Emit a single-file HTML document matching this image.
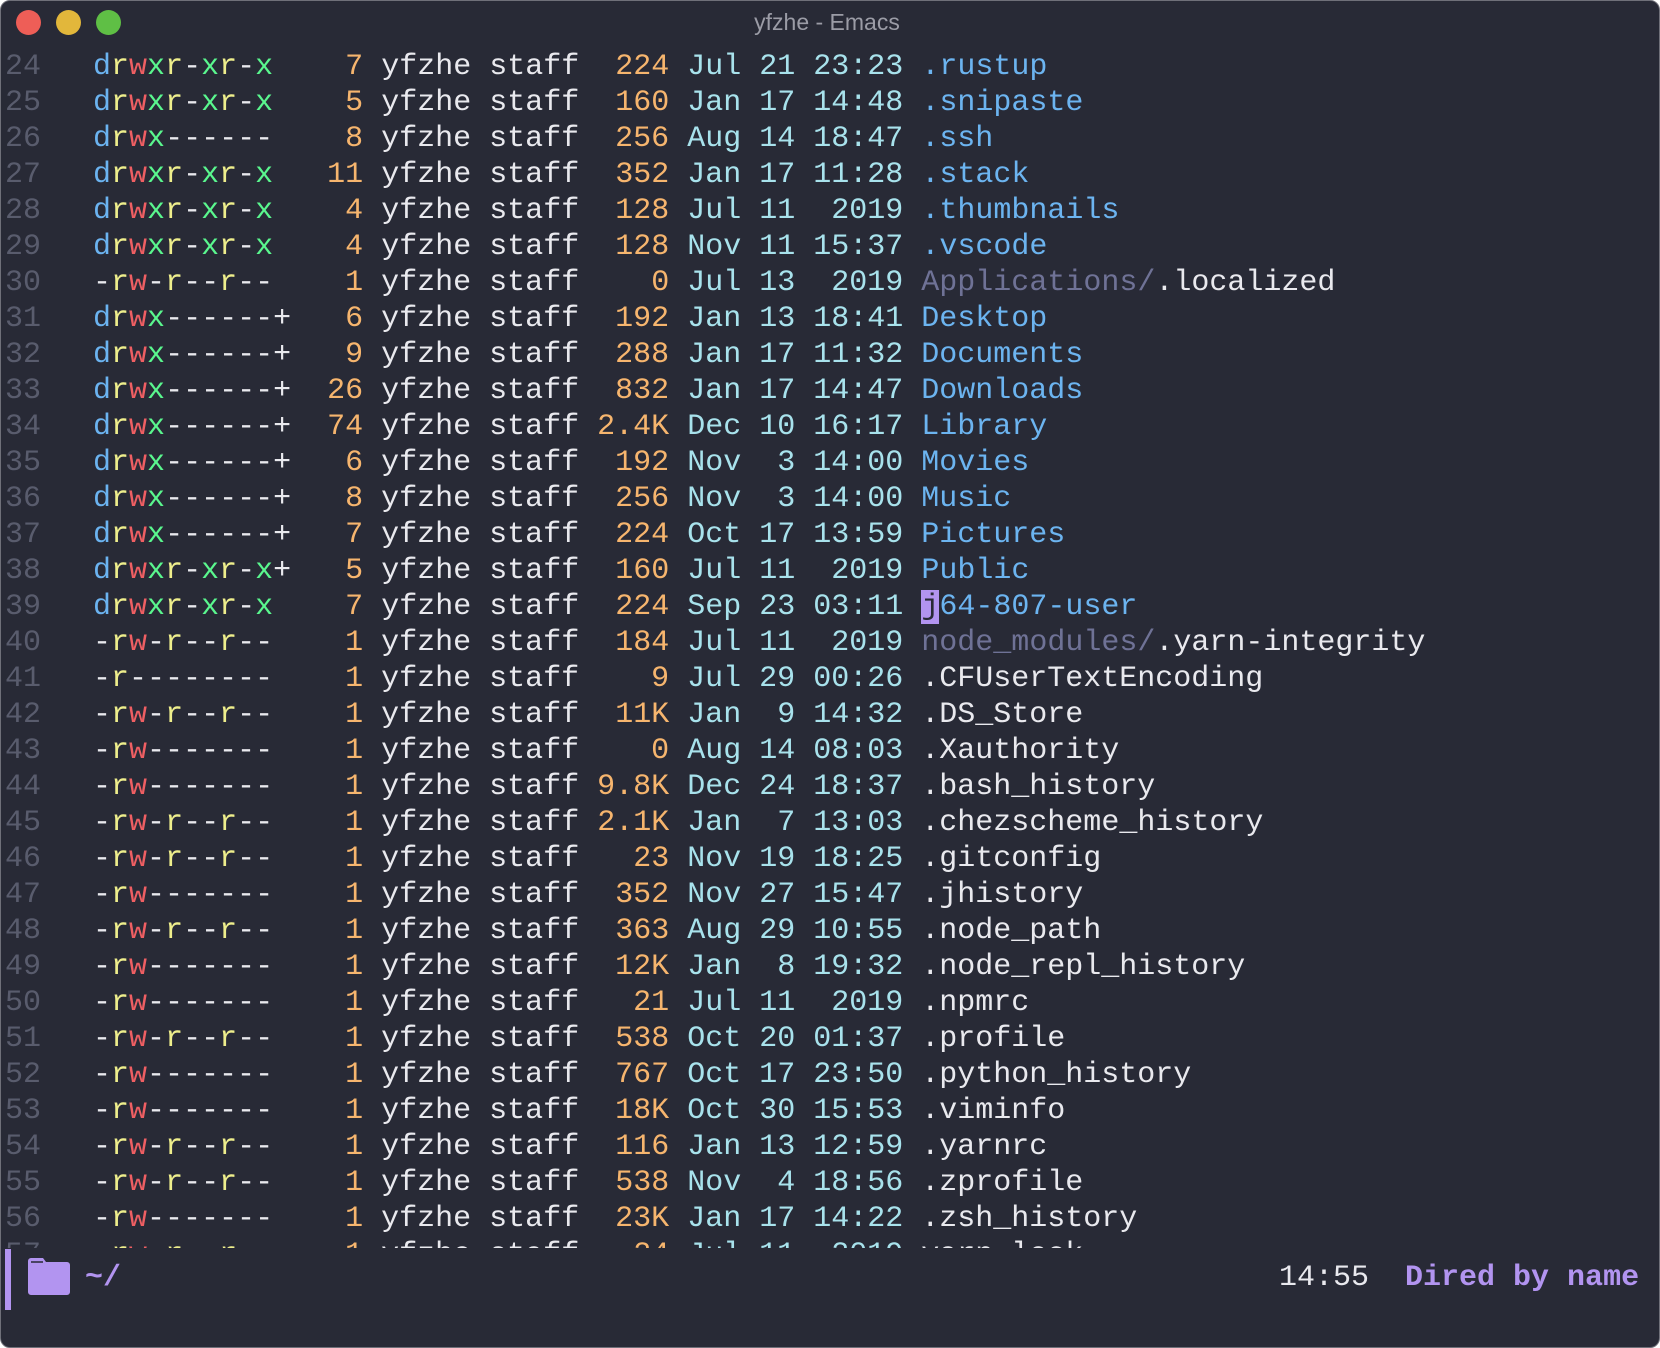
<!DOCTYPE html>
<html><head><meta charset="utf-8"><style>
html,body{margin:0;padding:0;background:#fff;width:1660px;height:1348px;overflow:hidden}
.win{position:absolute;left:0;top:0;width:1658px;height:1346px;background:#282a36;border:1px solid #6f7079;border-radius:10px;overflow:hidden}
.dot{position:absolute;top:9px;width:25px;height:25px;border-radius:50%}
.title{position:absolute;top:8px;left:-4px;width:1660px;text-align:center;font:23px "Liberation Sans",sans-serif;color:#9b9ca6}
.ln{position:absolute;left:4px;top:48px;height:1199px;overflow:hidden;font:30px/36px "Liberation Mono",monospace;color:#595c6d;white-space:pre}
.txt{position:absolute;left:92px;top:48px;height:1199px;overflow:hidden;font:30px/36px "Liberation Mono",monospace;color:#e9e9ee;white-space:pre}
em,i,u,s,b,q,kbd,var{font-style:normal;text-decoration:none;font-weight:normal;font-family:inherit;font-size:inherit}
q{quotes:none}
em{color:#6bb3f0} i{color:#eeee8c} u{color:#ef5f63} s{color:#5af78e}
b{color:#f6b56e} q{color:#a8e2ec} kbd{color:#6cb4f0} var{color:#6f7296}
.cur{background:#b294f0;color:#282a36}
.ml{position:absolute;top:1247px;left:0;width:1660px;height:62px}
</style></head><body><div class="win">
<div class="dot" style="left:15px;background:#ee5e57"></div>
<div class="dot" style="left:55px;background:#e2b73b"></div>
<div class="dot" style="left:95px;background:#5fbf45"></div>
<div class="title">yfzhe - Emacs</div>
<div class="ln">24
25
26
27
28
29
30
31
32
33
34
35
36
37
38
39
40
41
42
43
44
45
46
47
48
49
50
51
52
53
54
55
56
57</div>
<div class="txt"><em>d</em><i>r</i><u>w</u><s>x</s><i>r</i>-<s>x</s><i>r</i>-<s>x</s>    <b>7</b> yfzhe staff  <b>224</b> <q>Jul 21 23:23</q> <kbd>.rustup</kbd>
<em>d</em><i>r</i><u>w</u><s>x</s><i>r</i>-<s>x</s><i>r</i>-<s>x</s>    <b>5</b> yfzhe staff  <b>160</b> <q>Jan 17 14:48</q> <kbd>.snipaste</kbd>
<em>d</em><i>r</i><u>w</u><s>x</s>------    <b>8</b> yfzhe staff  <b>256</b> <q>Aug 14 18:47</q> <kbd>.ssh</kbd>
<em>d</em><i>r</i><u>w</u><s>x</s><i>r</i>-<s>x</s><i>r</i>-<s>x</s>   <b>11</b> yfzhe staff  <b>352</b> <q>Jan 17 11:28</q> <kbd>.stack</kbd>
<em>d</em><i>r</i><u>w</u><s>x</s><i>r</i>-<s>x</s><i>r</i>-<s>x</s>    <b>4</b> yfzhe staff  <b>128</b> <q>Jul 11  2019</q> <kbd>.thumbnails</kbd>
<em>d</em><i>r</i><u>w</u><s>x</s><i>r</i>-<s>x</s><i>r</i>-<s>x</s>    <b>4</b> yfzhe staff  <b>128</b> <q>Nov 11 15:37</q> <kbd>.vscode</kbd>
-<i>r</i><u>w</u>-<i>r</i>--<i>r</i>--    <b>1</b> yfzhe staff    <b>0</b> <q>Jul 13  2019</q> <var>Applications/</var>.localized
<em>d</em><i>r</i><u>w</u><s>x</s>------+   <b>6</b> yfzhe staff  <b>192</b> <q>Jan 13 18:41</q> <kbd>Desktop</kbd>
<em>d</em><i>r</i><u>w</u><s>x</s>------+   <b>9</b> yfzhe staff  <b>288</b> <q>Jan 17 11:32</q> <kbd>Documents</kbd>
<em>d</em><i>r</i><u>w</u><s>x</s>------+  <b>26</b> yfzhe staff  <b>832</b> <q>Jan 17 14:47</q> <kbd>Downloads</kbd>
<em>d</em><i>r</i><u>w</u><s>x</s>------+  <b>74</b> yfzhe staff <b>2.4K</b> <q>Dec 10 16:17</q> <kbd>Library</kbd>
<em>d</em><i>r</i><u>w</u><s>x</s>------+   <b>6</b> yfzhe staff  <b>192</b> <q>Nov  3 14:00</q> <kbd>Movies</kbd>
<em>d</em><i>r</i><u>w</u><s>x</s>------+   <b>8</b> yfzhe staff  <b>256</b> <q>Nov  3 14:00</q> <kbd>Music</kbd>
<em>d</em><i>r</i><u>w</u><s>x</s>------+   <b>7</b> yfzhe staff  <b>224</b> <q>Oct 17 13:59</q> <kbd>Pictures</kbd>
<em>d</em><i>r</i><u>w</u><s>x</s><i>r</i>-<s>x</s><i>r</i>-<s>x</s>+   <b>5</b> yfzhe staff  <b>160</b> <q>Jul 11  2019</q> <kbd>Public</kbd>
<em>d</em><i>r</i><u>w</u><s>x</s><i>r</i>-<s>x</s><i>r</i>-<s>x</s>    <b>7</b> yfzhe staff  <b>224</b> <q>Sep 23 03:11</q> <kbd><span class="cur">j</span>64-807-user</kbd>
-<i>r</i><u>w</u>-<i>r</i>--<i>r</i>--    <b>1</b> yfzhe staff  <b>184</b> <q>Jul 11  2019</q> <var>node_modules/</var>.yarn-integrity
-<i>r</i>--------    <b>1</b> yfzhe staff    <b>9</b> <q>Jul 29 00:26</q> .CFUserTextEncoding
-<i>r</i><u>w</u>-<i>r</i>--<i>r</i>--    <b>1</b> yfzhe staff  <b>11K</b> <q>Jan  9 14:32</q> .DS_Store
-<i>r</i><u>w</u>-------    <b>1</b> yfzhe staff    <b>0</b> <q>Aug 14 08:03</q> .Xauthority
-<i>r</i><u>w</u>-------    <b>1</b> yfzhe staff <b>9.8K</b> <q>Dec 24 18:37</q> .bash_history
-<i>r</i><u>w</u>-<i>r</i>--<i>r</i>--    <b>1</b> yfzhe staff <b>2.1K</b> <q>Jan  7 13:03</q> .chezscheme_history
-<i>r</i><u>w</u>-<i>r</i>--<i>r</i>--    <b>1</b> yfzhe staff   <b>23</b> <q>Nov 19 18:25</q> .gitconfig
-<i>r</i><u>w</u>-------    <b>1</b> yfzhe staff  <b>352</b> <q>Nov 27 15:47</q> .jhistory
-<i>r</i><u>w</u>-<i>r</i>--<i>r</i>--    <b>1</b> yfzhe staff  <b>363</b> <q>Aug 29 10:55</q> .node_path
-<i>r</i><u>w</u>-------    <b>1</b> yfzhe staff  <b>12K</b> <q>Jan  8 19:32</q> .node_repl_history
-<i>r</i><u>w</u>-------    <b>1</b> yfzhe staff   <b>21</b> <q>Jul 11  2019</q> .npmrc
-<i>r</i><u>w</u>-<i>r</i>--<i>r</i>--    <b>1</b> yfzhe staff  <b>538</b> <q>Oct 20 01:37</q> .profile
-<i>r</i><u>w</u>-------    <b>1</b> yfzhe staff  <b>767</b> <q>Oct 17 23:50</q> .python_history
-<i>r</i><u>w</u>-------    <b>1</b> yfzhe staff  <b>18K</b> <q>Oct 30 15:53</q> .viminfo
-<i>r</i><u>w</u>-<i>r</i>--<i>r</i>--    <b>1</b> yfzhe staff  <b>116</b> <q>Jan 13 12:59</q> .yarnrc
-<i>r</i><u>w</u>-<i>r</i>--<i>r</i>--    <b>1</b> yfzhe staff  <b>538</b> <q>Nov  4 18:56</q> .zprofile
-<i>r</i><u>w</u>-------    <b>1</b> yfzhe staff  <b>23K</b> <q>Jan 17 14:22</q> .zsh_history
-<i>r</i><u>w</u>-<i>r</i>--<i>r</i>--    <b>1</b> yfzhe staff   <b>24</b> <q>Jul 11  2019</q> yarn.lock</div>
<div class="ml">
<div style="position:absolute;left:4px;top:1px;width:6px;height:61px;background:#b294f0"></div>
<svg style="position:absolute;left:27px;top:10px" width="42" height="37" viewBox="0 0 42 37"><path d="M3 0h12l3 4h21a3 3 0 0 1 3 3v27a3 3 0 0 1-3 3H3a3 3 0 0 1-3-3V3a3 3 0 0 1 3-3z" fill="#b294f0"/><path d="M3 4h12" stroke="#282a36" stroke-width="1.5"/></svg>
<div style="position:absolute;left:84px;top:12px;font:bold 30px/36px 'Liberation Mono',monospace;color:#b294f0">~/</div>
<div style="position:absolute;left:1278px;top:12px;font:30px/36px 'Liberation Mono',monospace;color:#e9e9ee;white-space:pre">14:55  <span style="font-weight:bold;color:#b294f0">Dired by name</span></div>
</div>
</div></body></html>
